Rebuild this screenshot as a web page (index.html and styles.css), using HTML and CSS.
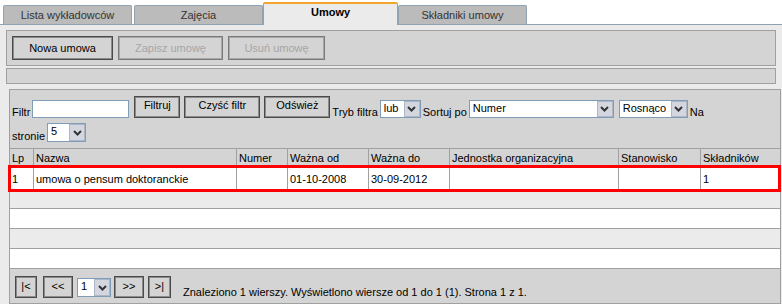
FILE: index.html
```html
<!DOCTYPE html>
<html lang="pl">
<head>
<meta charset="utf-8">
<title>Umowy</title>
<link rel="stylesheet" href="styles.css">
</head>
<body>
<div class="tabs">
  <div class="tab">Lista wykładowców</div>
  <div class="tab">Zajęcia</div>
  <div class="tab active">Umowy</div>
  <div class="tab">Składniki umowy</div>
</div>
<div class="panel">
  <div class="toolbar">
    <button class="btn w-nowa">Nowa umowa</button>
    <button class="btn disabled w-zapisz">Zapisz umowę</button>
    <button class="btn disabled w-usun">Usuń umowę</button>
  </div>
  <div class="statusbar"></div>
  <div class="listbox">
    <div class="filters">
      <div class="frow">
        <span class="lbl">Filtr</span>
        <span class="input w-filter"></span>
        <button class="btn fbtn w-filtruj">Filtruj</button>
        <button class="btn fbtn w-czysc">Czyść filtr</button>
        <button class="btn fbtn w-odswiez">Odśwież</button>
        <span class="lbl ml2">Tryb filtra</span>
        <span class="sel w-lub ml2"><span class="sel-text">lub</span><span class="sel-btn"><svg width="9" height="6" viewBox="0 0 9 6"><path d="M1 1 L4.5 4.5 L8 1" stroke="#333" stroke-width="2" fill="none"/></svg></span></span>
        <span class="lbl ml2">Sortuj po</span>
        <span class="sel w-numer ml2"><span class="sel-text">Numer</span><span class="sel-btn"><svg width="9" height="6" viewBox="0 0 9 6"><path d="M1 1 L4.5 4.5 L8 1" stroke="#333" stroke-width="2" fill="none"/></svg></span></span>
        <span class="sel w-rosn ml5"><span class="sel-text">Rosnąco</span><span class="sel-btn"><svg width="9" height="6" viewBox="0 0 9 6"><path d="M1 1 L4.5 4.5 L8 1" stroke="#333" stroke-width="2" fill="none"/></svg></span></span>
        <span class="lbl ml2">Na</span>
      </div>
      <div class="frow row2">
        <span class="lbl">stronie</span>
        <span class="sel w-str ml2"><span class="sel-text">5</span><span class="sel-btn"><svg width="9" height="6" viewBox="0 0 9 6"><path d="M1 1 L4.5 4.5 L8 1" stroke="#333" stroke-width="2" fill="none"/></svg></span></span>
      </div>
    </div>
    <div class="grid">
      <div class="grow head">
        <div class="cell">Lp</div>
        <div class="cell">Nazwa</div>
        <div class="cell">Numer</div>
        <div class="cell">Ważna od</div>
        <div class="cell">Ważna do</div>
        <div class="cell">Jednostka organizacyjna</div>
        <div class="cell">Stanowisko</div>
        <div class="cell">Składników</div>
      </div>
      <div class="grow data selected">
        <div class="cell">1</div>
        <div class="cell">umowa o pensum doktoranckie</div>
        <div class="cell"></div>
        <div class="cell">01-10-2008</div>
        <div class="cell">30-09-2012</div>
        <div class="cell"></div>
        <div class="cell"></div>
        <div class="cell">1</div>
      </div>
      <div class="erow grey first"></div>
      <div class="erow"></div>
      <div class="erow grey"></div>
      <div class="erow"></div>
    </div>
    <div class="pager">
      <button class="btn pbtn w-first">|&lt;</button>
      <button class="btn pbtn w-prev">&lt;&lt;</button>
      <span class="sel w-page"><span class="sel-text">1</span><span class="sel-btn"><svg width="9" height="6" viewBox="0 0 9 6"><path d="M1 1 L4.5 4.5 L8 1" stroke="#333" stroke-width="2" fill="none"/></svg></span></span>
      <button class="btn pbtn w-next">&gt;&gt;</button>
      <button class="btn pbtn w-last">&gt;|</button>
      <span class="pinfo">Znaleziono 1 wierszy. Wyświetlono wiersze od 1 do 1 (1). Strona 1 z 1.</span>
    </div>
  </div>
</div>
</body>
</html>
```

FILE: styles.css
```css
* { box-sizing: border-box; }
html, body { margin: 0; padding: 0; }
body {
  width: 782px;
  height: 304px;
  overflow: hidden;
  background: #fff;
  color: #000;
  font: 11px "Liberation Sans", Arial, sans-serif;
}

/* tabs */
.tabs {
  display: flex;
  align-items: flex-end;
  height: 25px;
  padding-left: 3px;
  border-bottom: 1px solid #8fa3b3;
}
.tab {
  width: 129px;
  height: 19px;
  margin-right: 2px;
  border: 1px solid #8fa3b3;
  border-bottom: none;
  border-radius: 2px 2px 0 0;
  background: #bbbbbb;
  color: #333;
  text-align: center;
  line-height: 18px;
}
.tab:nth-child(2) { margin-right: 0; }
.tab.active {
  width: 135px;
  height: 23px;
  margin: 0 0 -1px 0;
  border-top: 2px solid #f4a52c;
  background: #ebebeb;
  color: #000;
  font-weight: bold;
  line-height: 16px;
  position: relative;
}

/* panel */
.panel {
  background: #ebebeb;
  padding: 5px 0 0 6px;
  height: 279px;
}
.toolbar {
  display: flex;
  gap: 5px;
  height: 36px;
  margin-right: 6px;
  padding: 5px;
  border: 1px solid #a0a0a0;
  background: #d4d4d4;
}
.btn {
  font: inherit;
  color: #000;
  padding: 0;
  margin: 0;
  height: 24px;
  background: #d4d4d4;
  border: 1px solid #4a4a4a;
  box-shadow: inset 0 0 0 1px #8c8c8c;
  text-align: center;
}
.btn.disabled {
  color: #a6a6a6;
  border-color: #7a7a7a;
  box-shadow: inset 0 0 0 1px #a8a8a8;
}
.w-nowa { width: 101px; }
.w-zapisz { width: 105px; }
.w-usun { width: 97px; }

.statusbar {
  height: 16px;
  margin: 2px 6px 0 0;
  border: 1px solid #a0a0a0;
  background: #d4d4d4;
}

.listbox {
  margin: 5px 1px 0 3px;
  border: 1px solid #a0a0a0;
  background: #d4d4d4;
}

/* filters */
.filters { padding: 6px 0 6px 2px; }
.frow {
  display: flex;
  align-items: flex-end;
  height: 22px;
}
.frow.row2 { height: 19px; margin-top: 5px; }
.lbl { line-height: 12px; white-space: nowrap; }
.ml2 { margin-left: 2px; }
.ml5 { margin-left: 5px; }
.input {
  display: block;
  height: 18px;
  margin-left: 2px;
  border: 1px solid #7f9db9;
  background: #fff;
}
.w-filter { width: 97px; }
.fbtn {
  height: 22px;
  margin-left: 4px;
  padding-bottom: 5px;
}
.w-filtruj { width: 46px; margin-left: 5px; }
.w-czysc { width: 76px; }
.w-odswiez { width: 66px; }

.sel {
  display: flex;
  height: 18px;
  border: 1px solid #7f9db9;
  background: #fff;
}
.sel-text {
  flex: 1;
  padding-left: 3px;
  line-height: 15px;
  white-space: nowrap;
  overflow: hidden;
}
.sel-btn {
  width: 16px;
  margin: 0;
  display: flex;
  align-items: center;
  justify-content: center;
  background: #d3d6df;
  border: 1px solid #aeb6c6;
}
.w-lub { width: 41px; }
.w-numer { width: 145px; }
.w-rosn { width: 69px; }
.w-str { width: 39px; height: 19px; }

/* grid */
.grow {
  display: grid;
  grid-template-columns: 24px 203px 51px 81px 81px 169px 82px 1fr;
}
.cell {
  padding-left: 2px;
  border-right: 1px solid #a0a0a0;
  white-space: nowrap;
  overflow: hidden;
}
.cell:last-child { border-right: none; }
.head {
  border-top: 1px solid #a0a0a0;
  border-bottom: 1px solid #a0a0a0;
}
.head .cell {
  height: 17px;
  padding-top: 2px;
  line-height: 15px;
}
.data {
  background: #fff;
  border-bottom: 1px solid #a0a0a0;
  position: relative;
}
.data .cell { height: 24px; line-height: 24px; }
.selected::after {
  content: "";
  position: absolute;
  top: -2px;
  left: -2px;
  right: -1px;
  bottom: -1px;
  border: 3px solid #ff0000;
}
.erow {
  height: 20px;
  background: #fff;
  border-bottom: 1px solid #a0a0a0;
}
.erow.grey { background: #ebebeb; }
.erow.first { height: 17px; }

/* pager */
.pager {
  display: flex;
  align-items: flex-end;
  height: 34px;
  padding: 6px 0 5px 5px;
}
.pbtn { height: 22px; padding-bottom: 2px; }
.w-first { width: 22px; }
.w-prev { width: 30px; margin-left: 6px; }
.w-page { width: 34px; height: 19px; margin-left: 4px; margin-bottom: 1px; }
.w-next { width: 30px; margin-left: 3px; }
.w-last { width: 23px; margin-left: 4px; }
.pinfo {
  margin-left: 12px;
  line-height: 12px;
  white-space: nowrap;
}
```
